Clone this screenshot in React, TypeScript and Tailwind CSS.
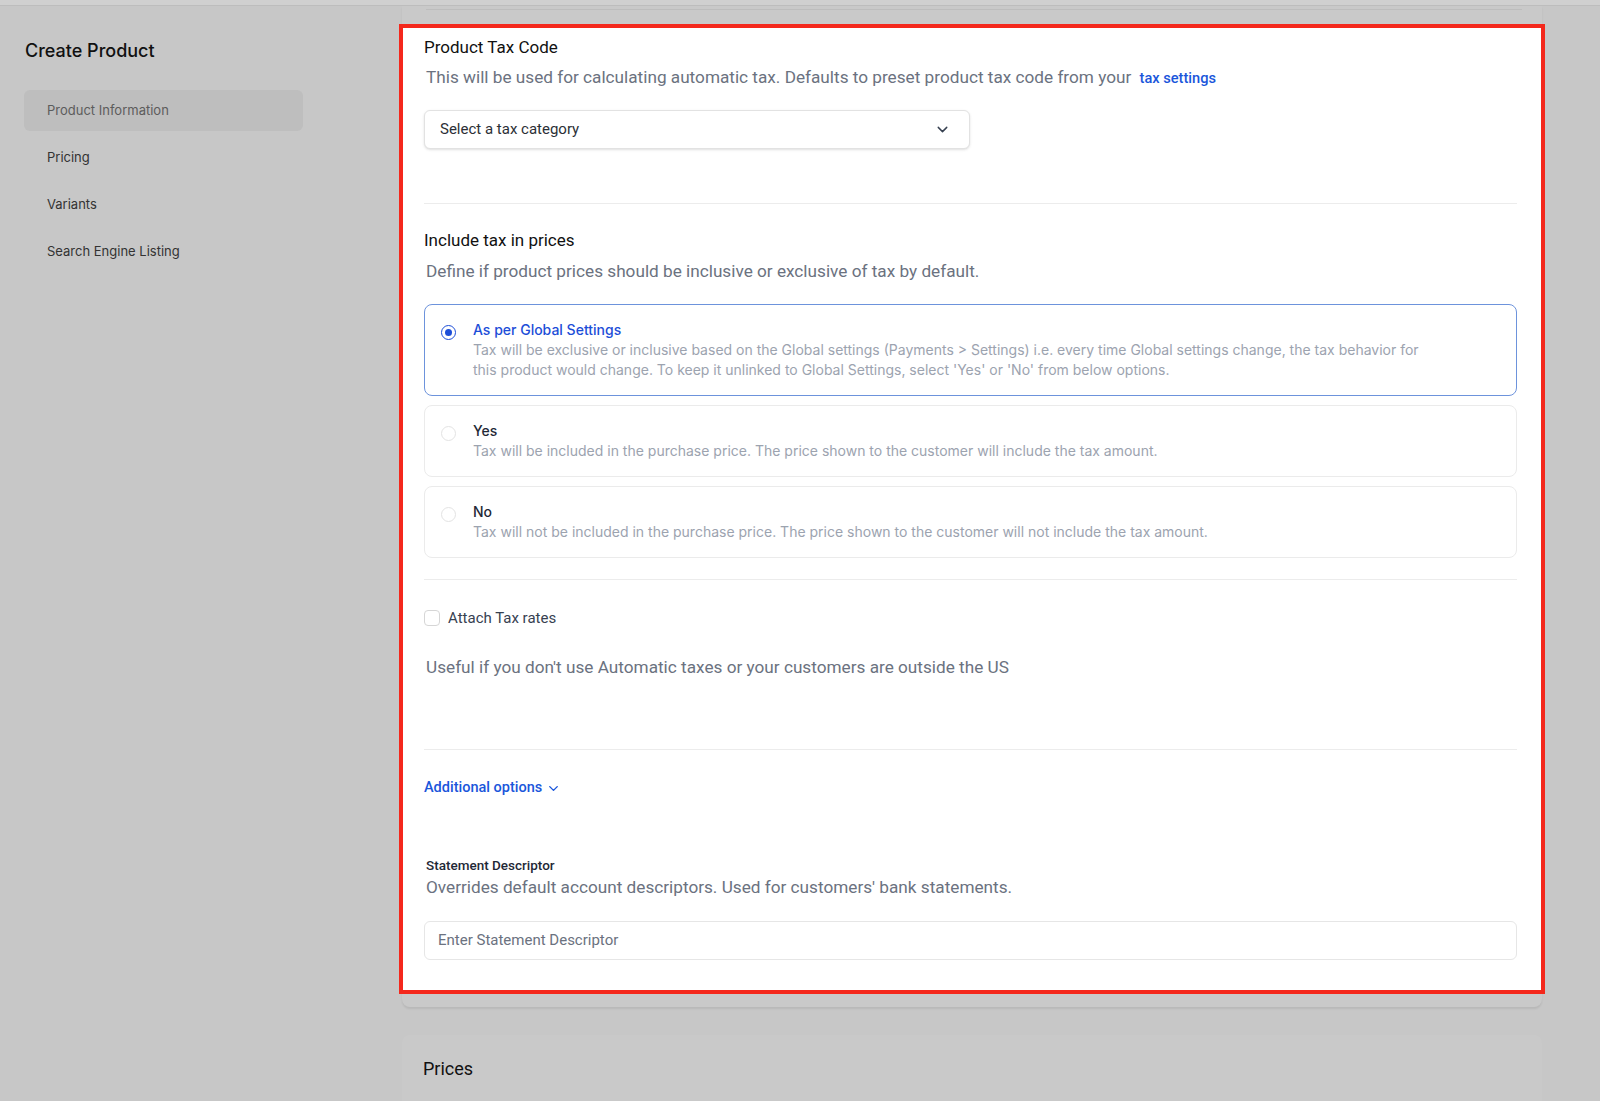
import { ChevronDown } from "lucide-react";

const sideItems = ["Product Information", "Pricing", "Variants", "Search Engine Listing"];

const taxOptions = [
  {
    id: "global",
    title: "As per Global Settings",
    desc: "Tax will be exclusive or inclusive based on the Global settings (Payments > Settings) i.e. every time Global settings change, the tax behavior for this product would change. To keep it unlinked to Global Settings, select 'Yes' or 'No' from below options.",
  },
  {
    id: "yes",
    title: "Yes",
    desc: "Tax will be included in the purchase price. The price shown to the customer will include the tax amount.",
  },
  {
    id: "no",
    title: "No",
    desc: "Tax will not be included in the purchase price. The price shown to the customer will not include the tax amount.",
  },
];

function Sidebar() {
  return (
    <aside className="w-[402px] shrink-0 pl-6 pt-[31px] font-['Inter',sans-serif]">
      <h1 className="pl-px text-[18px] leading-7 font-medium text-[#111111]">Create Product</h1>
      <nav className="mt-[25px] flex w-[279px] flex-col gap-[6px]">
        {sideItems.map((item, i) => (
          <div
            key={item}
            className={
              i === 0
                ? "flex h-[41px] items-center rounded-md bg-[#bebebe] pl-[23px] text-[13px] text-[#5c5c5c]"
                : "flex h-[41px] items-center pl-[23px] text-[13px] text-[#333333]"
            }
          >
            {item}
          </div>
        ))}
      </nav>
    </aside>
  );
}

function TaxOption({ title, desc, selected }: { title: string; desc: string; selected: boolean }) {
  return (
    <div
      className={
        selected
          ? "flex items-start gap-[17px] rounded-lg border border-[#6d93dc] py-[15px] pl-4 pr-20"
          : "flex items-start gap-[17px] rounded-lg border border-[#ebebeb] py-[15px] pl-4 pr-20"
      }
    >
      <span
        className={
          selected
            ? "mt-[5px] flex h-[15px] w-[15px] shrink-0 items-center justify-center rounded-full border-[1.5px] border-[#1d4ed8]"
            : "mt-[5px] flex h-[15px] w-[15px] shrink-0 items-center justify-center rounded-full border border-[#e3e3e3]"
        }
      >
        {selected && <span className="h-[7px] w-[7px] rounded-full bg-[#1d4ed8]" />}
      </span>
      <div className="font-['Inter',sans-serif] text-[14px] leading-5">
        <div className={selected ? "font-medium text-[#1d4ed8]" : "font-medium text-[#1f2937]"}>{title}</div>
        <p className="text-[#9ca3af]">{desc}</p>
      </div>
    </div>
  );
}

function TaxSection() {
  return (
    <section className="-mx-[3px] border-4 border-[#f4281c] bg-white pb-[30px] pl-[21px] pr-6 pt-[7px] font-['Roboto',sans-serif]">
      <h2 className="text-[17px] leading-6 text-[#111111]">Product Tax Code</h2>
      <p className="mt-[6px] pl-0.5 text-[17.2px] leading-6 text-[#6b7280]">
        This will be used for calculating automatic tax. Defaults to preset product tax code from your{" "}
        <a className="ml-1 text-[14.6px] font-medium text-[#1a56db]">tax settings</a>
      </p>
      <button className="mt-[20px] flex h-[39px] w-[546px] items-center justify-between rounded-md border border-[#e2e2e2] bg-white pl-[15px] pr-[18px] text-[15px] text-[#2b2f36] shadow-sm">
        Select a tax category
        <ChevronDown size={17} strokeWidth={2} className="text-[#374151]" />
      </button>

      <div className="mt-[54px] h-px bg-[#ececec]" />

      <h2 className="mt-[24px] text-[17px] leading-6 text-[#111111]">Include tax in prices</h2>
      <p className="mt-[7px] pl-0.5 text-[17.2px] leading-6 text-[#6b7280]">
        Define if product prices should be inclusive or exclusive of tax by default.
      </p>
      <div className="mt-[21px] flex flex-col gap-[9px]">
        {taxOptions.map((o) => (
          <TaxOption key={o.id} title={o.title} desc={o.desc} selected={o.id === "global"} />
        ))}
      </div>

      <div className="mt-[21px] h-px bg-[#ececec]" />

      <label className="mt-[26px] flex h-6 items-center gap-2">
        <span className="h-4 w-4 rounded-[4px] border border-[#d6d6d6] bg-white" />
        <span className="text-[15px] text-[#374151]">Attach Tax rates</span>
      </label>
      <p className="mt-[25px] pl-0.5 text-[17.2px] leading-6 text-[#6b7280]">
        Useful if you don't use Automatic taxes or your customers are outside the US
      </p>

      <div className="mt-[70px] h-px bg-[#ececec]" />

      <button className="mt-[28px] flex h-5 items-center gap-1 text-[14.5px] font-medium text-[#1a56db]">
        Additional options
        <ChevronDown size={15} strokeWidth={2.25} />
      </button>

      <div className="mt-[57px] pl-0.5 text-[13.5px] leading-5 font-medium text-[#1f2937]">Statement Descriptor</div>
      <p className="pl-0.5 text-[17.2px] leading-6 text-[#6b7280]">
        Overrides default account descriptors. Used for customers' bank statements.
      </p>
      <div className="mt-[22px] flex h-[39px] items-center rounded-md border border-[#e6e6e6] pl-[13px] text-[15px] text-[#6b7280]">
        Enter Statement Descriptor
      </div>
    </section>
  );
}

export default function App() {
  return (
    <div className="h-[1101px] w-[1600px] overflow-hidden bg-[#c7c7c7]">
      <div className="h-[6px] border-b border-[#bdbdbd] bg-[#d0d0d0]" />
      <div className="flex">
        <Sidebar />
        <main className="flex-1 pr-[58px]">
          <div className="rounded-b-lg bg-[#c9c9c9] shadow-[0_2px_2px_rgba(0,0,0,0.08)]">
            <div className="h-[18px] pl-6 pr-5 pt-[3px]">
              <div className="h-px bg-[#bdbdbd]" />
            </div>
            <TaxSection />
            <div className="h-[13px]" />
          </div>
          <div className="mt-[28px] h-[200px] rounded-t-lg bg-[#c9c9c9] pl-[21px] pr-6 pt-5 font-['Roboto',sans-serif]">
            <h2 className="text-[18px] leading-7 text-[#111111]">Prices</h2>
          </div>
        </main>
      </div>
    </div>
  );
}
